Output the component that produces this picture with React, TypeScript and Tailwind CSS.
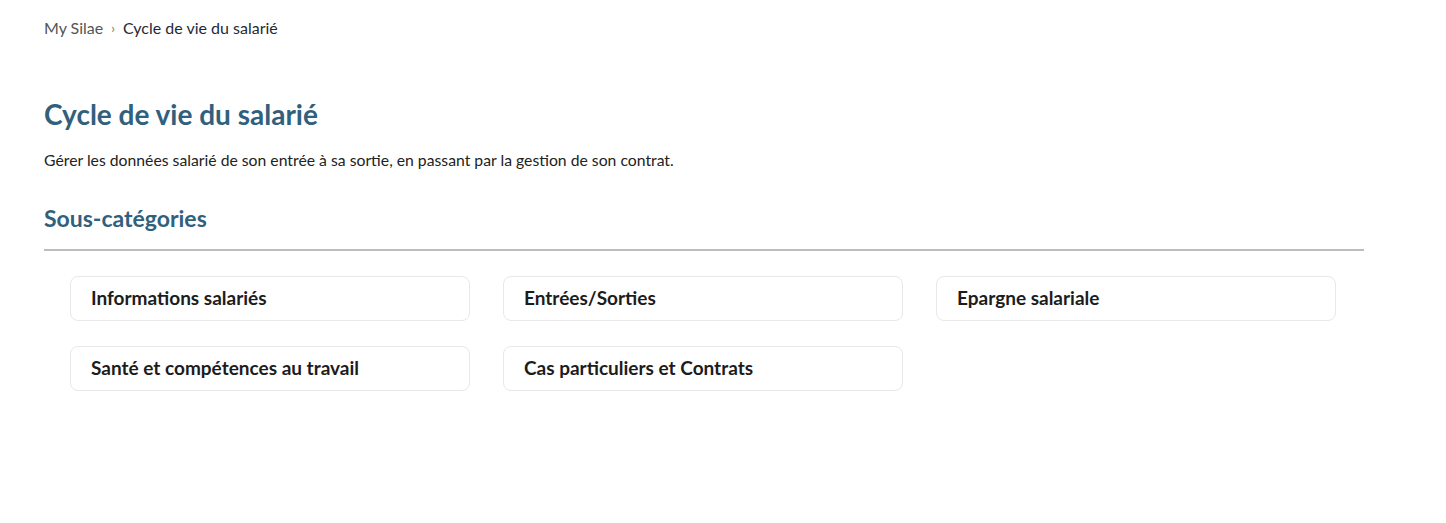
const subCategories = [
  'Informations salariés',
  'Entrées/Sorties',
  'Epargne salariale',
  'Santé et compétences au travail',
  'Cas particuliers et Contrats',
];

export default function App() {
  return (
    <div className="min-h-screen bg-white font-['Lato',_'Open_Sans',_sans-serif] text-[#222]">
      <div className="w-[1320px] ml-[44px]">
        <nav className="flex items-center gap-2 pt-[18px] text-[16px] leading-5">
          <span className="text-[#555]">My Silae</span>
          <span className="text-[#777] text-[13px]">›</span>
          <span className="text-[#1f2a36]">Cycle de vie du salarié</span>
        </nav>

        <h1 className="mt-[58px] text-[28px] font-bold leading-9 text-[#31607d]">Cycle de vie du salarié</h1>
        <p className="mt-[18px] text-[15.75px] leading-5 text-[#222]">
          Gérer les données salarié de son entrée à sa sortie, en passant par la gestion de son contrat.
        </p>

        <h2 className="mt-[32px] pb-[15px] text-[23px] font-bold leading-8 text-[#31607d] border-b-2 border-[#bdbdbd]">
          Sous-catégories
        </h2>

        <div className="grid grid-cols-[400px_400px_400px] gap-x-[33px] gap-y-[25px] pl-[26px] pt-[25px]">
          {subCategories.map((name) => (
            <a
              key={name}
              className="flex h-[45px] items-center rounded-lg border border-[#e8e8e8] bg-white px-5 text-[19px] font-bold text-[#1c1c1c] cursor-pointer hover:border-[#ccc]"
            >
              {name}
            </a>
          ))}
        </div>
      </div>
    </div>
  );
}
